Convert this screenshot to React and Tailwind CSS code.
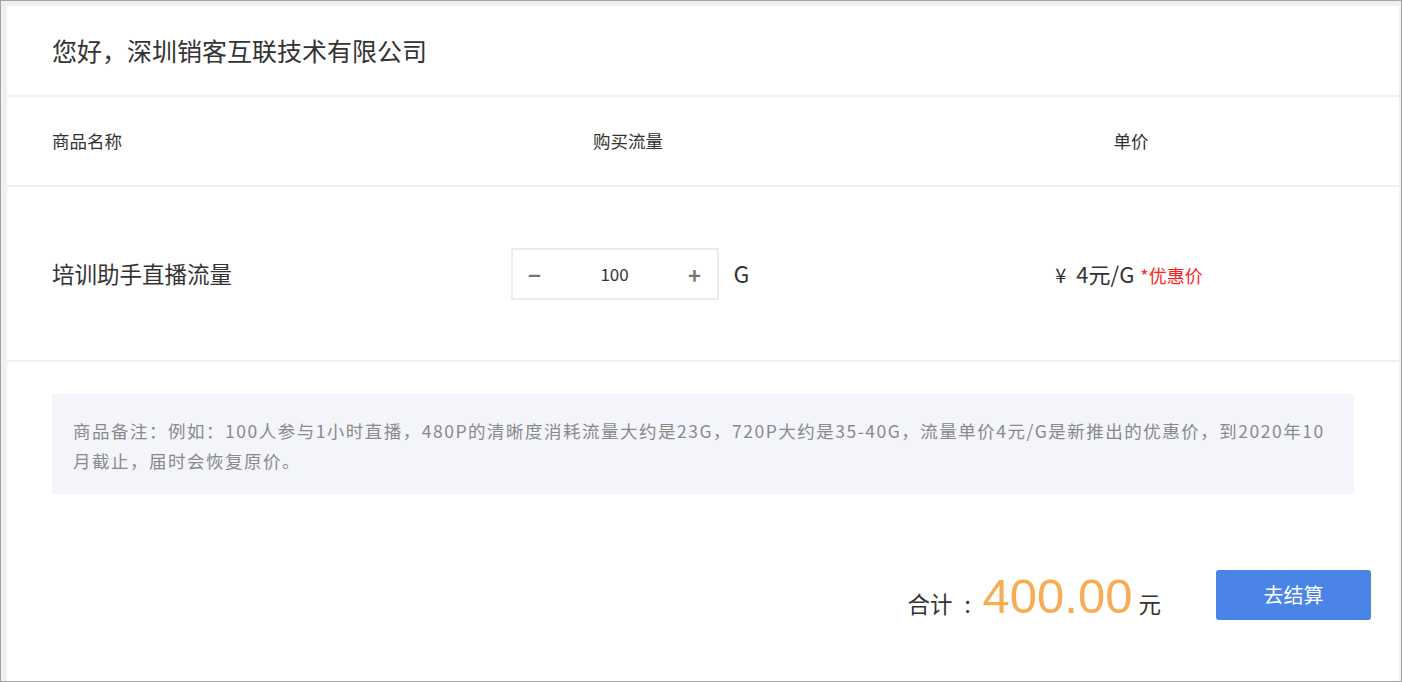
import React from "react";

export default function App() {
  const font = { fontFamily: '"Microsoft YaHei", "Noto Sans CJK SC", "Noto Sans", sans-serif' };
  return (
    <div className="w-[1402px] h-[682px] overflow-hidden border border-[#a3a3a3] bg-[#f0f0f2] pl-[6px] pt-[5px] pr-[2px]" style={font}>
      <div className="h-full bg-white flex flex-col">
        {/* header */}
        <div className="h-[91px] flex items-center pl-[45px] text-[25px] text-[#333] border-b-2 border-[#f0f0f2] shrink-0">
          您好，深圳销客互联技术有限公司
        </div>
        {/* column header */}
        <div className="h-[90px] flex items-center px-[45px] text-[17.5px] text-[#333] border-b-2 border-[#f0f0f2] shrink-0">
          <div className="w-[294px]">商品名称</div>
          <div className="w-[564px] text-center">购买流量</div>
          <div className="w-[442px] text-center">单价</div>
        </div>
        {/* item row */}
        <div className="h-[175px] flex items-center px-[45px] text-[#333] border-b-2 border-[#f0f0f2] shrink-0">
          <div className="w-[294px] text-[22.5px]">培训助手直播流量</div>
          <div className="w-[564px] flex items-center justify-center pl-[4px]">
            <div className="flex items-center w-[208px] h-[52px] border-2 border-[#ececec] text-[#777]">
              <span className="w-[44px] text-center text-[22px] leading-none font-bold">−</span>
              <span className="flex-1 text-center text-[17px] text-[#333]">100</span>
              <span className="w-[44px] text-center text-[22px] leading-none font-bold">+</span>
            </div>
            <span className="ml-[15px] text-[23px] text-[#333]">G</span>
          </div>
          <div className="w-[442px] flex items-baseline justify-center pr-[4px]">
            <span className="text-[20px] text-[#333]">¥</span>
            <span className="ml-[10px] text-[22px] text-[#333]">4元/G</span>
            <span className="ml-[6px] text-[18px] text-[#ff1f1f]">*优惠价</span>
          </div>
        </div>
        {/* note */}
        <div className="mt-[32px] mx-[45px] h-[100px] bg-[#f4f5fa] px-[21px] pt-[22px] text-[17.5px] leading-[30px] tracking-[1.5px] text-[#8a8a8a] shrink-0">
          商品备注：例如：100人参与1小时直播，480P的清晰度消耗流量大约是23G，720P大约是35-40G，流量单价4元/G是新推出的优惠价，到2020年10<br />月截止，届时会恢复原价。
        </div>
        {/* total */}
        <div className="mt-[74px] flex items-center justify-end pr-[28px]">
          <div className="flex items-baseline text-[#333] mt-[4px]">
            <span className="text-[22.5px]">合计</span>
            <span className="w-[30px] text-center text-[22.5px]">:</span>
            <span className="text-[49px] leading-none text-[#f8ac53]" style={{ fontFamily: '"Liberation Sans", Arial, sans-serif' }}>400.00</span>
            <span className="ml-[6px] text-[22.5px]">元</span>
          </div>
          <button className="ml-[55px] w-[155px] h-[50px] rounded-[3px] bg-[#4a84e6] text-white text-[20px]">去结算</button>
        </div>
      </div>
    </div>
  );
}
